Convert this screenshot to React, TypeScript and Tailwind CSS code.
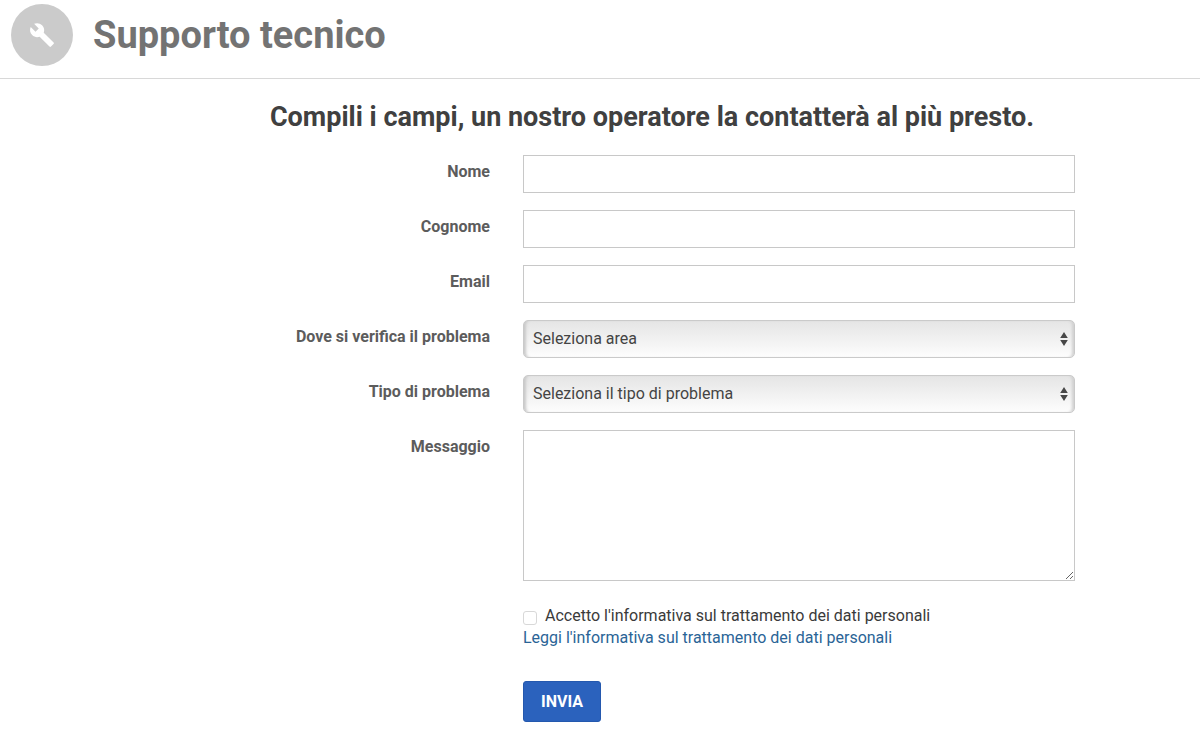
import type { ReactNode } from "react";

const fieldClass =
  "block h-[38px] w-full border border-[#c8c8c8] bg-white px-2 text-base text-[#444] outline-none focus:border-[#2b62bd]";

function Row({ id, label, children }: { id: string; label: string; children: ReactNode }) {
  return (
    <div className="grid grid-cols-[261px_minmax(0,1fr)] gap-x-[33px]">
      <label htmlFor={id} className="pt-[5px] text-right text-base leading-6 font-bold text-[#5c5c5c]">
        {label}
      </label>
      {children}
    </div>
  );
}

function TextField({ id, label, type = "text" }: { id: string; label: string; type?: string }) {
  return (
    <Row id={id} label={label}>
      <input id={id} name={id} type={type} className={fieldClass} />
    </Row>
  );
}

function SelectField({ id, label, placeholder }: { id: string; label: string; placeholder: string }) {
  return (
    <Row id={id} label={label}>
      <div className="relative">
        <select
          id={id}
          name={id}
          className="block h-[38px] w-full appearance-none rounded-[5px] border border-[#cacaca] bg-linear-to-b from-[#e5e5e5] to-[#fdfdfd] pr-6 pl-[9px] text-base text-[#444] shadow-[inset_4px_0_3px_-2px_#c8c8c8,inset_-4px_0_3px_-2px_#d0d0d0] outline-none"
        >
          <option>{placeholder}</option>
        </select>
        <svg
          aria-hidden="true"
          viewBox="0 0 8 14"
          className="pointer-events-none absolute top-3 right-[7px] h-[14px] w-2 fill-[#484848]"
        >
          <path d="M4 0 7.800 6H.2zM4 14 .2 8h7.600z" />
        </svg>
      </div>
    </Row>
  );
}

export default function App() {
  return (
    <div className="min-h-screen bg-white font-[Roboto,sans-serif] text-[#3a3a3a]">
      <header className="flex h-[79px] items-start gap-5 border-b border-[#d8d8d8] pt-1 pl-[11px]">
        <div className="flex size-[62px] shrink-0 items-center justify-center rounded-full bg-[#cbcbcb]">
          <svg aria-hidden="true" viewBox="0 0 24 24" className="size-[26px] fill-white">
            <path d="M22.7 19l-9.1-9.1c.9-2.3.4-5-1.5-6.9-2-2-5-2.4-7.4-1.3L9 6 6 9 1.6 4.7C.4 7.1.9 10.1 2.9 12.1c1.9 1.9 4.6 2.4 6.9 1.5l9.1 9.1c.4.4 1 .4 1.4 0l2.3-2.3c.5-.4.5-1.1.1-1.4z" />
          </svg>
        </div>
        <h1 className="pt-[7px] text-[38px] leading-[48px] font-bold text-[#737373]">Supporto tecnico</h1>
      </header>

      <main className="pt-5 pr-[125px] pb-2 pl-[229px]">
        <h2 className="text-center text-[27px] leading-9 font-bold text-[#404040]">
          Compili i campi, un nostro operatore la contatterà al più presto.
        </h2>
        <form className="mt-5 flex flex-col gap-[17px]" onSubmit={(event) => event.preventDefault()}>
          <TextField id="nome" label="Nome" />
          <TextField id="cognome" label="Cognome" />
          <TextField id="email" label="Email" type="email" />
          <SelectField id="area" label="Dove si verifica il problema" placeholder="Seleziona area" />
          <SelectField id="tipo" label="Tipo di problema" placeholder="Seleziona il tipo di problema" />
          <Row id="messaggio" label="Messaggio">
            <textarea
              id="messaggio"
              name="messaggio"
              className="block h-[151px] w-full resize-y border border-[#c8c8c8] bg-white p-2 text-base text-[#444] outline-none focus:border-[#2b62bd]"
            />
          </Row>
          <div className="pt-[7px] pl-[294px] text-base leading-[22px]">
            <div className="flex items-center gap-2">
              <input
                id="privacy"
                name="privacy"
                type="checkbox"
                className="mt-1 size-[14px] appearance-none rounded-[3px] border border-[#d8d8d8] bg-white checked:bg-[#2b62bd]"
              />
              <label htmlFor="privacy">Accetto l'informativa sul trattamento dei dati personali</label>
            </div>
            <a href="#informativa" className="text-[#2a6496]">
              Leggi l'informativa sul trattamento dei dati personali
            </a>
            <div className="pt-8">
              <button
                type="submit"
                className="block h-[41px] rounded-[3px] border border-[#2458ae] bg-[#2b62bd] px-[17px] text-base font-bold text-white"
              >
                INVIA
              </button>
            </div>
          </div>
        </form>
      </main>
    </div>
  );
}
